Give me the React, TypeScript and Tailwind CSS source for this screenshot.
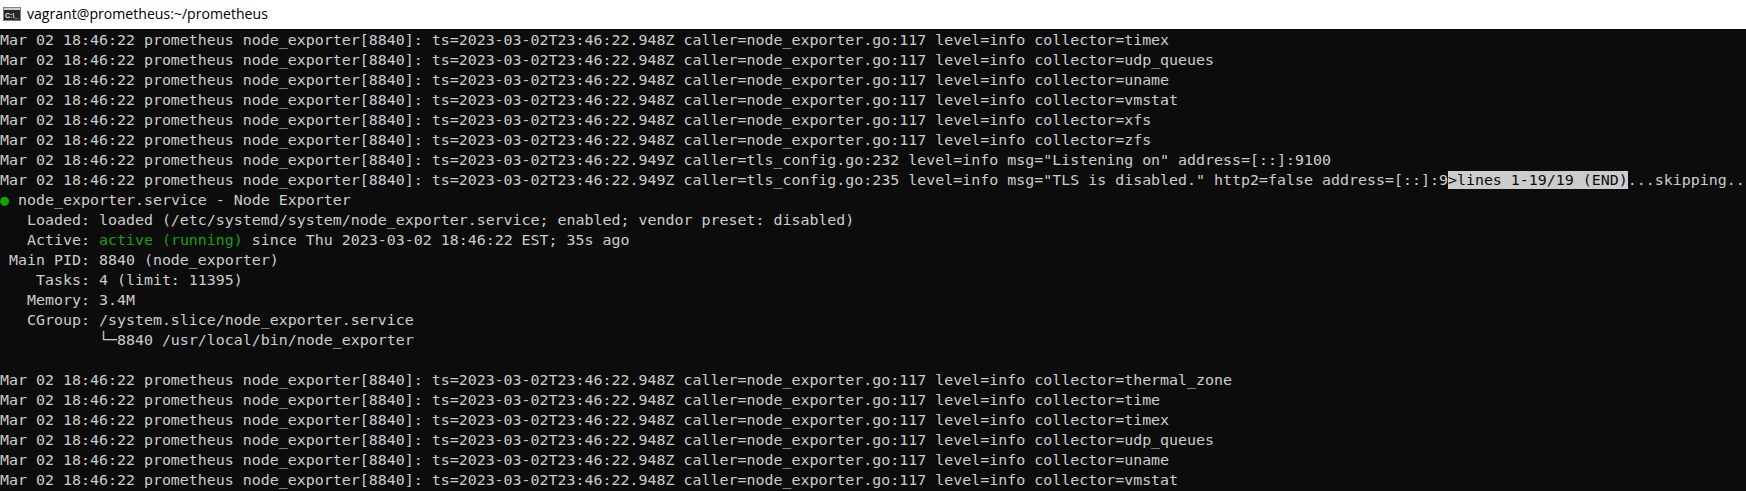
const caller = "caller=node_exporter.go:117 level=info collector=";
const prefix = "Mar 02 18:46:22 prometheus node_exporter[8840]: ts=2023-03-02T23:46:22.";

function collector(name: string) {
  return `${prefix}948Z ${caller}${name}`;
}

function Row({ children }: { children?: React.ReactNode }) {
  return <div className="h-5 leading-5 whitespace-pre">{children}</div>;
}

function ConsoleIcon() {
  return (
    <svg width="18" height="14" viewBox="0 0 18 14" className="shrink-0">
      <rect width="18" height="14" fill="#808080" />
      <rect x="1" y="1" width="16" height="2" fill="#d0d0d0" />
      <rect x="1" y="3" width="16" height="10" fill="#262626" />
      <text x="2" y="10.5" fontSize="7" fontWeight="700" fill="#f0f0f0" fontFamily="'Liberation Sans', sans-serif">
        C:\_
      </text>
    </svg>
  );
}

export default function App() {
  const top = ["timex", "udp_queues", "uname", "vmstat", "xfs", "zfs"];
  const bottom = ["thermal_zone", "time", "timex", "udp_queues", "uname", "vmstat"];

  return (
    <div className="h-[491px] w-[1746px] overflow-hidden bg-[#0c0c0c]">
      <div className="flex h-[29px] items-center gap-[6px] bg-white pb-[1px] pl-[3px]">
        <ConsoleIcon />
        <span className="font-['Open_Sans',sans-serif] text-[14.1px] text-black">
          vagrant@prometheus:~/prometheus
        </span>
      </div>
      <div className="pt-px font-['DejaVu_Sans_Mono',monospace] text-[14.95px] text-[#cccccc]">
        {top.map((name) => (
          <Row key={name}>{collector(name)}</Row>
        ))}
        <Row>{`${prefix}949Z caller=tls_config.go:232 level=info msg="Listening on" address=[::]:9100`}</Row>
        <Row>
          {`${prefix}949Z caller=tls_config.go:235 level=info msg="TLS is disabled." http2=false address=[::]:9`}
          <span className="bg-[#cccccc] text-[#0c0c0c]">{">lines 1-19/19 (END)"}</span>
          ...skipping..
        </Row>
        <Row>
          <span className="text-[#13a10e]">●</span> node_exporter.service - Node Exporter
        </Row>
        <Row>{"   Loaded: loaded (/etc/systemd/system/node_exporter.service; enabled; vendor preset: disabled)"}</Row>
        <Row>
          {"   Active: "}
          <span className="text-[#13a10e]">active (running)</span> since Thu 2023-03-02 18:46:22 EST; 35s ago
        </Row>
        <Row>{" Main PID: 8840 (node_exporter)"}</Row>
        <Row>{"    Tasks: 4 (limit: 11395)"}</Row>
        <Row>{"   Memory: 3.4M"}</Row>
        <Row>{"   CGroup: /system.slice/node_exporter.service"}</Row>
        <Row>{"           └─8840 /usr/local/bin/node_exporter"}</Row>
        <Row />
        {bottom.map((name) => (
          <Row key={name}>{collector(name)}</Row>
        ))}
      </div>
    </div>
  );
}
